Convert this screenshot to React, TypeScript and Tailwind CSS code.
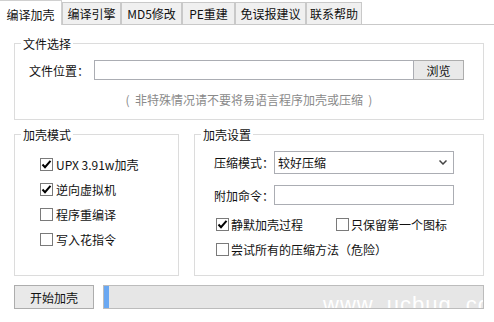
import React from "react";

const Check = ({ checked }: { checked?: boolean }) => (
  <span className="w-[13px] h-[13px] border border-[#7a7a7a] bg-white flex items-center justify-center shrink-0">
    {checked && (
      <svg width="11" height="11" viewBox="0 0 11 11">
        <path d="M1.5 5.5 L4 8.2 L9.5 1.8" fill="none" stroke="#000" strokeWidth="2" />
      </svg>
    )}
  </span>
);

const tabs = [
  { t: "编译引擎", w: "w-[59px]" },
  { t: "MD5修改", w: "w-[61px]" },
  { t: "PE重建", w: "w-[53px]" },
  { t: "免误报建议", w: "w-[71px]" },
  { t: "联系帮助", w: "w-[56px]" },
];

export default function App() {
  return (
    <div className="w-[494px] h-[322px] bg-white relative overflow-hidden text-[12px] leading-[17px] text-[#111] font-['Noto_Sans_CJK_SC',sans-serif]">
      {/* tab strip */}
      <div className="flex items-start h-[25px]">
        <div className="w-[62px] h-[25px] bg-white border-t border-r border-[#d0d0d0] flex items-center justify-center pt-[2px]">
          编译加壳
        </div>
        {tabs.map((tb) => (
          <div
            key={tb.t}
            className={`${tb.w} mt-[2px] h-[23px] bg-[#f0f0f0] border border-[#c9c9c9] flex items-center justify-center`}
          >
            {tb.t}
          </div>
        ))}
        <div className="flex-1 h-[25px] border-b border-[#c9c9c9]" />
      </div>

      <div className="pl-[14px] pr-[10px]">
        {/* 文件选择 */}
        <fieldset className="mt-[10px] border border-[#dcdcdc] p-0">
          <legend className="ml-[6px] px-[2px] leading-[17px]">文件选择</legend>
          <div className="pt-[8px] pb-[11px] pl-[14px]">
            <div className="flex items-center h-[20px]">
              <span className="w-[65px]">文件位置：</span>
              <div className="w-[320px] h-[20px] border border-[#abadb3] bg-white" />
              <div className="w-[50px] h-[20px] border border-[#adadad] border-l-0 bg-[#e9e9e9] flex items-center justify-center">
                浏览
              </div>
            </div>
            <div className="mt-[11px] h-[17px] text-center text-[#8a8a8a] pr-[14px]">
              (&nbsp;&nbsp;非特殊情况请不要将易语言程序加壳或压缩&nbsp;&nbsp;)
            </div>
          </div>
        </fieldset>

        <div className="flex mt-[6px] gap-[15px]">
          {/* 加壳模式 */}
          <fieldset className="w-[165px] h-[150px] border border-[#dcdcdc] p-0">
            <legend className="ml-[6px] px-[2px] leading-[17px]">加壳模式</legend>
            <div className="pt-[13px] pl-[25px] flex flex-col gap-[8px]">
              <div className="flex items-center h-[17px] gap-[3px]">
                <Check checked />
                <span>UPX 3.91w加壳</span>
              </div>
              <div className="flex items-center h-[17px] gap-[3px]">
                <Check checked />
                <span>逆向虚拟机</span>
              </div>
              <div className="flex items-center h-[17px] gap-[3px]">
                <Check />
                <span>程序重编译</span>
              </div>
              <div className="flex items-center h-[17px] gap-[3px]">
                <Check />
                <span>写入花指令</span>
              </div>
            </div>
          </fieldset>

          {/* 加壳设置 */}
          <fieldset className="w-[290px] h-[150px] border border-[#dcdcdc] p-0">
            <legend className="ml-[6px] px-[2px] leading-[17px]">加壳设置</legend>
            <div className="pt-[8px] pl-[19px]">
              <div className="flex items-center h-[23px]">
                <span className="w-[60px]">压缩模式：</span>
                <div className="w-[180px] h-[23px] border border-[#abadb3] bg-white flex items-center justify-between pl-[3px] pr-[6px]">
                  <span>较好压缩</span>
                  <svg width="8" height="5" viewBox="0 0 8 5">
                    <path d="M0.5 0.5 L4 4 L7.5 0.5" fill="none" stroke="#444" strokeWidth="1.5" />
                  </svg>
                </div>
              </div>
              <div className="flex items-center h-[20px] mt-[11px]">
                <span className="w-[60px]">附加命令：</span>
                <div className="w-[180px] h-[20px] border border-[#abadb3] bg-white" />
              </div>
              <div className="flex items-center h-[17px] mt-[11px] ml-[2px]">
                <div className="w-[120px] flex items-center gap-[2px]">
                  <Check checked />
                  <span>静默加壳过程</span>
                </div>
                <div className="flex items-center gap-[2px]">
                  <Check />
                  <span>只保留第一个图标</span>
                </div>
              </div>
              <div className="flex items-center h-[17px] mt-[8px] ml-[2px] gap-[2px]">
                <Check />
                <span>尝试所有的压缩方法（危险）</span>
              </div>
            </div>
          </fieldset>
        </div>

        {/* bottom */}
        <div className="flex mt-[9px] gap-[9px]">
          <div className="w-[80px] h-[24px] border border-[#adadad] bg-[#e9e9e9] flex items-center justify-center">
            开始加壳
          </div>
          <div className="relative w-[381px] h-[24px] border border-[#bcbcbc] bg-[#e6e6e6] flex overflow-hidden">
            <div className="w-[5px] h-full bg-[#6aa8f2]" />
            <span className="absolute left-[219px] top-[8px] whitespace-nowrap text-[22px] leading-[22px] text-white font-['Liberation_Sans',sans-serif] tracking-[1px]">
              www. ucbug. com
            </span>
          </div>
        </div>
      </div>
    </div>
  );
}
